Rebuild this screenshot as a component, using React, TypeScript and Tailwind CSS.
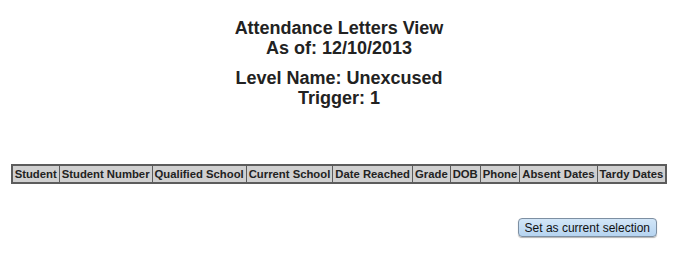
import React from "react";

const cols = ["Student","Student Number","Qualified School","Current School","Date Reached","Grade","DOB","Phone","Absent Dates","Tardy Dates"];

export default function App() {
  return (
    <div className="w-[678px] h-[269px] bg-white text-[#222] pt-[18px]" style={{fontFamily: '"Liberation Sans", Arial, sans-serif'}}>
      <div className="text-center font-bold text-[18px] leading-[20px]">
        <div>Attendance Letters View</div>
        <div>As of: 12/10/2013</div>
      </div>
      <div className="text-center font-bold text-[18px] leading-[20px] mt-[10px]">
        <div>Level Name: Unexcused</div>
        <div>Trigger: 1</div>
      </div>
      <div className="flex justify-center mt-[56px]">
        <table className="border-collapse border-2 border-[#5c5c5c] bg-[#d0d0d0]">
          <thead>
            <tr>
              {cols.map((c) => (
                <th key={c} className="border border-[#5c5c5c] px-[2px] h-[18px] text-[11.3px] leading-[14px] font-bold text-[#222] whitespace-nowrap">{c}</th>
              ))}
            </tr>
          </thead>
        </table>
      </div>
      <div className="flex justify-end pr-[21px] mt-[34px]">
        <button className="h-[19px] px-[6px] rounded-[4px] border border-[#7d8fa2] bg-gradient-to-b from-[#d2e6f8] to-[#b6d4f0] text-[12px] leading-[16px] text-[#111] shadow-[0_1px_1px_rgba(0,0,0,0.3)]">Set as current selection</button>
      </div>
    </div>
  );
}
